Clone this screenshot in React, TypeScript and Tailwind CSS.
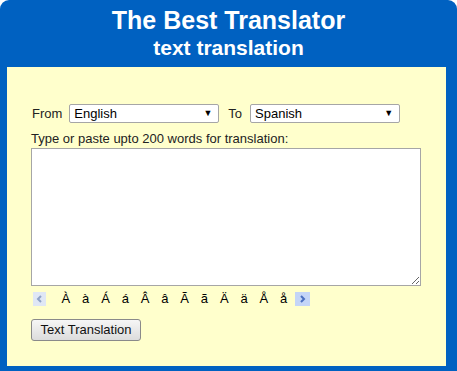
const chars = ["À", "à", "Á", "á", "Â", "â", "Ã", "ã", "Ä", "ä", "Å", "å"];

function FakeSelect({ value }: { value: string }) {
  return (
    <div className="flex h-[19px] w-[150px] items-center justify-between rounded-[2px] border border-[#a6a6a6] bg-white pl-[4px] pr-[6px] text-[13px] text-black">
      <span>{value}</span>
      <span className="text-[9px] leading-none">▼</span>
    </div>
  );
}

export default function App() {
  return (
    <div className="h-[371px] w-[457px] overflow-hidden bg-white font-['Liberation_Sans',Arial,sans-serif]">
      <div className="flex h-full flex-col rounded-t-[9px] bg-[#0061c1]">
        <div className="flex h-[67px] flex-col items-center pt-[6px] font-bold text-white">
          <h1 className="text-[25px] leading-[29px]">The Best Translator</h1>
          <h2 className="text-[21px] leading-[25px]">text translation</h2>
        </div>
        <div className="ml-[7px] mr-[11px] h-[299px] bg-[#ffffcc] pl-[24px] pt-[37px] text-[13px] text-[#222]">
          <div className="flex items-center">
            <span className="mr-[7px] ml-[1px]">From</span>
            <FakeSelect value="English" />
            <span className="ml-[9px] mr-[8px]">To</span>
            <FakeSelect value="Spanish" />
          </div>
          <p className="mt-[7px] leading-[15px]">
            Type or paste upto 200 words for translation:
          </p>
          <textarea className="mt-[2px] block h-[138px] w-[390px] border border-[#a6a6a6] bg-white outline-none" />
          <div className="mt-[5px] flex h-[16px] items-center">
            <span className="ml-[2px] flex h-[14px] w-[13px] items-center justify-center bg-[#dfe7f5] text-[#8fa3c8]">
              <svg width="7" height="8" viewBox="0 0 7 8">
                <path d="M5 1 L2 4 L5 7" fill="none" stroke="currentColor" strokeWidth="2" />
              </svg>
            </span>
            <div className="ml-[10px] flex">
              {chars.map((c) => (
                <span key={c} className="w-[19.8px] text-center text-[13px] leading-none text-black">
                  {c}
                </span>
              ))}
            </div>
            <span className="ml-[1px] flex h-[14px] w-[15px] items-center justify-center bg-[#c4d5f7] text-[#4a6fc0]">
              <svg width="7" height="8" viewBox="0 0 7 8">
                <path d="M2 1 L5 4 L2 7" fill="none" stroke="currentColor" strokeWidth="2" />
              </svg>
            </span>
          </div>
          <button className="mt-[12px] h-[22px] w-[110px] rounded-[3px] border border-[#8a8a8a] bg-gradient-to-b from-[#f6f6f6] to-[#dcdcdc] text-[13px] text-[#111]">
            Text Translation
          </button>
        </div>
      </div>
    </div>
  );
}
